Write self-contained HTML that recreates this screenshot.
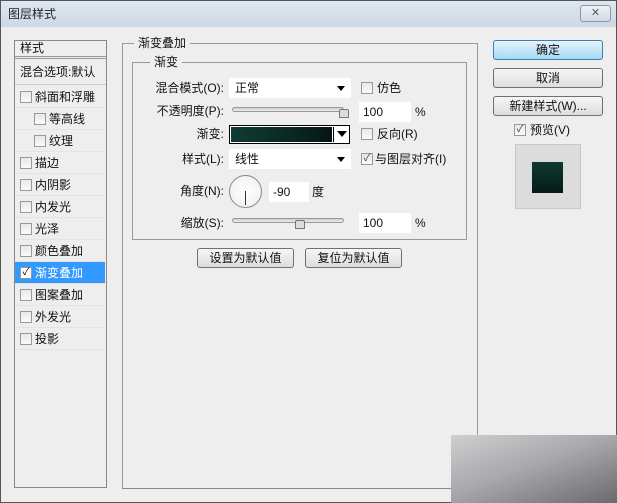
<!DOCTYPE html>
<html><head><meta charset="utf-8"><style>
*{margin:0;padding:0;box-sizing:border-box}
body{width:617px;height:503px;overflow:hidden;background:#eee;font-family:"Liberation Sans","Noto Sans CJK SC",sans-serif;font-size:12px;color:#111;position:relative}
.a{position:absolute}
.win{left:0;top:0;width:617px;height:503px;border:1px solid #555;background:#eeeeee}
.title{left:1px;top:1px;width:615px;height:26px;background:linear-gradient(#dfe8f1,#cbd8e6);}
.cb{position:absolute;width:12px;height:12px;border:1px solid #999;background:linear-gradient(#e8e8e8,#fafafa)}
.item{position:absolute;left:15px;width:90px;height:22px;border-bottom:1px solid #e4e4e4;line-height:22px}
.btn{position:absolute;height:20px;border:1px solid #707070;border-radius:3px;background:linear-gradient(#f6f6f6,#dddddd);text-align:center;line-height:18px}
.inp{position:absolute;background:#fff;height:20px;line-height:20px;padding-left:4px}
.sel{position:absolute;background:#fff;height:20px;line-height:20px;padding-left:6px}
.sel:after{content:"";position:absolute;right:6px;top:8px;border:4px solid transparent;border-top:5px solid #000;border-bottom:0}
.lbl{position:absolute;text-align:right;line-height:20px}
.track{position:absolute;height:5px;border:1px solid #999;border-radius:3px;background:linear-gradient(#ccc,#eee)}
.thumb{position:absolute;width:10px;height:9px;border:1px solid #777;background:#ddd;border-radius:2px 2px 0 0}
</style></head><body>
<div class="a win"></div>
<div class="a title"></div>
<div class="a" style="left:8px;top:5px;font-size:12px;color:#222">图层样式</div>
<div class="a" style="left:580px;top:5px;width:31px;height:17px;border:1px solid #8a96a6;border-radius:3px;background:linear-gradient(#eef2f6,#d3dbe4);text-align:center;line-height:14px;color:#556;font-size:11px">✕</div>

<div class="a" style="left:14px;top:40px;width:93px;height:448px;border:1px solid #888;background:#eeeeee"></div>
<div class="a" style="left:15px;top:41px;width:91px;height:18px;border-bottom:3px double #999;padding-left:5px;line-height:14px">样式</div>
<div class="a" style="left:15px;top:61px;width:91px;height:24px;padding-left:5px;line-height:22px;border-bottom:1px solid #ccc;white-space:nowrap;overflow:hidden">混合选项:默认</div>
<div class="item" style="top:86px"><span class="cb" style="left:5px;top:5px"></span><span style="margin-left:20px">斜面和浮雕</span></div>
<div class="item" style="top:108px"><span class="cb" style="left:19px;top:5px"></span><span style="margin-left:34px">等高线</span></div>
<div class="item" style="top:130px"><span class="cb" style="left:19px;top:5px"></span><span style="margin-left:34px">纹理</span></div>
<div class="item" style="top:152px"><span class="cb" style="left:5px;top:5px"></span><span style="margin-left:20px">描边</span></div>
<div class="item" style="top:174px"><span class="cb" style="left:5px;top:5px"></span><span style="margin-left:20px">内阴影</span></div>
<div class="item" style="top:196px"><span class="cb" style="left:5px;top:5px"></span><span style="margin-left:20px">内发光</span></div>
<div class="item" style="top:218px"><span class="cb" style="left:5px;top:5px"></span><span style="margin-left:20px">光泽</span></div>
<div class="item" style="top:240px"><span class="cb" style="left:5px;top:5px"></span><span style="margin-left:20px">颜色叠加</span></div>
<div class="item" style="top:262px;background:#3399ff;color:#fff"><span class="cb" style="left:5px;top:5px;background:#fff;color:#000;font-size:10px;line-height:10px;text-align:center">✓</span><span style="margin-left:20px">渐变叠加</span></div>
<div class="item" style="top:284px"><span class="cb" style="left:5px;top:5px"></span><span style="margin-left:20px">图案叠加</span></div>
<div class="item" style="top:306px"><span class="cb" style="left:5px;top:5px"></span><span style="margin-left:20px">外发光</span></div>
<div class="item" style="top:328px"><span class="cb" style="left:5px;top:5px"></span><span style="margin-left:20px">投影</span></div>

<div class="a" style="left:122px;top:43px;width:356px;height:446px;border:1px solid #999;border-bottom:1px solid #888"></div>
<div class="a" style="left:134px;top:35px;background:#eee;padding:0 4px;line-height:16px">渐变叠加</div>
<div class="a" style="left:132px;top:62px;width:335px;height:178px;border:1px solid #999"></div>
<div class="a" style="left:150px;top:54px;background:#eee;padding:0 4px;line-height:16px">渐变</div>

<div class="lbl" style="left:140px;width:84px;top:78px">混合模式(O):</div>
<div class="sel" style="left:229px;top:78px;width:122px">正常</div>
<span class="cb" style="left:361px;top:82px"></span><div class="a" style="left:377px;top:78px;line-height:20px">仿色</div>

<div class="lbl" style="left:140px;width:84px;top:101px">不透明度(P):</div>
<div class="track" style="left:232px;top:107px;width:112px"></div>
<div class="thumb" style="left:339px;top:109px"></div>
<div class="inp" style="left:359px;top:102px;width:52px">100</div>
<div class="a" style="left:415px;top:102px;line-height:20px">%</div>

<div class="lbl" style="left:140px;width:84px;top:124px">渐变:</div>
<div class="a" style="left:229px;top:125px;width:121px;height:19px;border:1px solid #000;background:#fff"></div>
<div class="a" style="left:231px;top:127px;width:101px;height:15px;background:linear-gradient(90deg,#0f3c33,#0a2320 70%,#071513)"></div>
<div class="a" style="left:333px;top:127px;width:1px;height:15px;background:#000"></div>
<div class="a" style="left:337px;top:131px;border:5px solid transparent;border-top:6px solid #000;border-bottom:0"></div>
<span class="cb" style="left:361px;top:128px"></span><div class="a" style="left:377px;top:124px;line-height:20px">反向(R)</div>

<div class="lbl" style="left:140px;width:84px;top:149px">样式(L):</div>
<div class="sel" style="left:229px;top:149px;width:122px">线性</div>
<span class="cb" style="left:361px;top:153px;font-size:10px;line-height:10px;text-align:center;color:#335">✓</span><div class="a" style="left:375px;top:149px;line-height:20px">与图层对齐(I)</div>

<div class="lbl" style="left:140px;width:84px;top:181px">角度(N):</div>
<div class="a" style="left:229px;top:175px;width:33px;height:33px;border:1px solid #888;border-radius:50%;background:radial-gradient(#fff,#eee)"></div>
<div class="a" style="left:245px;top:191px;width:1px;height:14px;background:#333"></div>
<div class="inp" style="left:269px;top:182px;width:40px">-90</div>
<div class="a" style="left:312px;top:182px;line-height:20px">度</div>

<div class="lbl" style="left:140px;width:84px;top:213px">缩放(S):</div>
<div class="track" style="left:232px;top:218px;width:112px"></div>
<div class="thumb" style="left:295px;top:220px"></div>
<div class="inp" style="left:359px;top:213px;width:52px">100</div>
<div class="a" style="left:415px;top:213px;line-height:20px">%</div>

<div class="btn" style="left:197px;top:248px;width:97px">设置为默认值</div>
<div class="btn" style="left:305px;top:248px;width:97px">复位为默认值</div>

<div class="btn" style="left:493px;top:40px;width:110px;border-color:#3c7fb1;background:linear-gradient(#e5f4fc,#a7d9f5)">确定</div>
<div class="btn" style="left:493px;top:68px;width:110px">取消</div>
<div class="btn" style="left:493px;top:96px;width:110px">新建样式(W)...</div>
<span class="cb" style="left:514px;top:124px;font-size:10px;line-height:10px;text-align:center;color:#335">✓</span><div class="a" style="left:530px;top:121px;line-height:18px">预览(V)</div>
<div class="a" style="left:515px;top:144px;width:66px;height:65px;background:#dcdcdc;border:1px solid #c8c8c8"></div>
<div class="a" style="left:532px;top:162px;width:31px;height:31px;background:linear-gradient(#0d3a31,#061a17)"></div>

<div class="a" style="left:451px;top:435px;width:166px;height:68px;background:linear-gradient(160deg,#cfcfcf,#a9a9ae 45%,#6a6a6e)"></div>
</body></html>
